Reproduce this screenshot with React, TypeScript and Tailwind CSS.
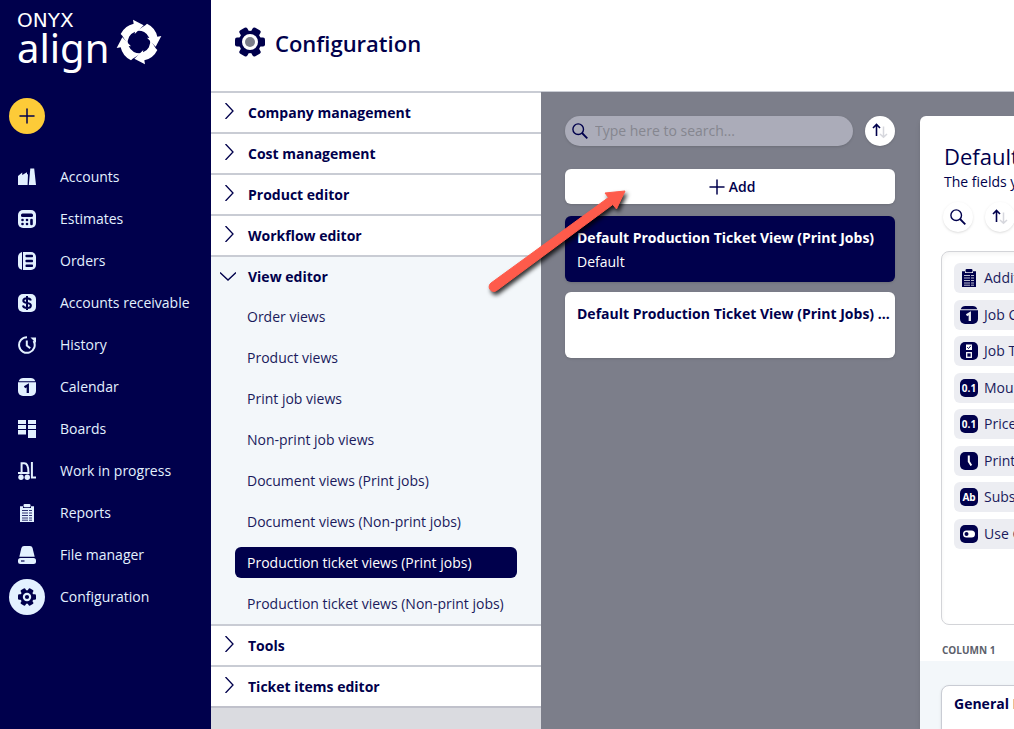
import React, { useState } from "react";
import { Plus } from "lucide-react";

type IconProps = { className?: string };

const Accounts = ({ className }: IconProps) => (
  <svg viewBox="0 0 18 18" className={className} fill="currentColor">
    <path d="M0 17V8l4.200-3.400V7L9 4.300V6.500l1-.6L9.600 17zM12.300.6h3.900L18 17h-7.200z" />
  </svg>
);

const Estimates = ({ className }: IconProps) => (
  <svg viewBox="0 0 18 18" className={className}>
    <rect width="18" height="18" rx="5" fill="currentColor" />
    <rect x="3" y="3.500" width="12" height="3.500" rx="1.500" fill="#00004c" />
    <g fill="#00004c">
      <circle cx="4.500" cy="10" r="1.300" />
      <circle cx="9" cy="10" r="1.300" />
      <circle cx="4.500" cy="14" r="1.300" />
      <circle cx="9" cy="14" r="1.300" />
      <rect x="12.200" y="8.700" width="2.600" height="6.600" rx="1.300" />
    </g>
  </svg>
);

const Orders = ({ className }: IconProps) => (
  <svg viewBox="0 0 18 18" className={className}>
    <rect width="18" height="18" rx="5" fill="currentColor" />
    <rect x="4" width="1" height="18" fill="#00004c" />
    <g fill="#00004c">
      <rect x="7.500" y="2.800" width="7.500" height="2.500" rx=".8" />
      <rect x="7.500" y="7.700" width="7.500" height="2.500" rx=".8" />
      <rect x="7.500" y="12.600" width="7.500" height="2.500" rx=".8" />
    </g>
  </svg>
);

const Receivable = ({ className }: IconProps) => (
  <svg viewBox="0 0 18 18" className={className}>
    <rect width="18" height="18" rx="5" fill="currentColor" />
    <path
      d="M12.900 6.500C12.500 4.900 11.100 4.200 9 4.200c-2.200 0-3.700 1-3.700 2.500C5.300 10 12.900 8 12.900 11.400c0 1.500-1.600 2.500-3.900 2.500s-3.700-.9-4.100-2.500M9 2v14"
      fill="none"
      stroke="#00004c"
      strokeWidth="2"
    />
  </svg>
);

const History = ({ className }: IconProps) => (
  <svg viewBox="0 0 18 18" className={className} fill="none" stroke="currentColor" strokeWidth="2">
    <path d="M9 1.200A7.800 7.800 0 1 0 15.600 5" />
    <path d="M12.500 1.500H18V7z" fill="currentColor" stroke="none" />
    <path d="M8.800 4.500v5l3.400 2.800" />
  </svg>
);

const Calendar = ({ className }: IconProps) => (
  <svg viewBox="0 0 18 18" className={className}>
    <path d="M.7 3.200C1.500 1.200 3 0 5.200 0h7.600c2.200 0 3.700 1.200 4.500 3.200z" fill="currentColor" />
    <path d="M0 4.200h18V13a5 5 0 0 1-5 5H5a5 5 0 0 1-5-5z" fill="currentColor" />
    <path d="M6.500 9.200 9.800 7.300V15" fill="none" className="stroke-(--hole)" strokeWidth="2.300" />
  </svg>
);

const Boards = ({ className }: IconProps) => (
  <svg viewBox="0 0 18 18" className={className} fill="currentColor">
    <path d="M0 0h8v4H0zM0 5h8v4H0zM0 10h8v4.400H0zM10 0h8v4h-8zM10 5h8v4h-8zM10 10h8v8h-8z" />
  </svg>
);

const Forklift = ({ className }: IconProps) => (
  <svg viewBox="0 0 18 18" className={className} fill="none" stroke="currentColor" strokeWidth="2">
    <path d="M3.600 10V1.200h2.600c3 0 4.200 4.400 4.200 8.800M0 11h11.500M13.900 0v15.500H18" />
    <circle cx="3" cy="15.300" r="2.700" fill="currentColor" stroke="none" />
    <circle cx="9.300" cy="15.300" r="2.700" fill="currentColor" stroke="none" />
  </svg>
);

const Clipboard = ({ className }: IconProps) => (
  <svg viewBox="0 0 18 18" className={className}>
    <path d="M2 2.200h3V4h8V2.200h3V18H2z" fill="currentColor" />
    <rect x="5.500" width="7" height="3.200" rx="1.200" fill="currentColor" />
    <path
      d="M4 6.500h6M11 6.500h3M4 9h6M11 9h3M4 11.500h6M11 11.500h3M4 14h6M11 14h3M4 16.200h6M11 16.200h3"
      className="stroke-(--hole)"
      strokeWidth=".8"
    />
  </svg>
);

const Drive = ({ className }: IconProps) => (
  <svg viewBox="0 0 18 18" className={className} fill="currentColor">
    <path d="M1.300 10.800 3.400 2.300C3.800.8 4.700 0 6 0h6c1.300 0 2.200.8 2.600 2.300l2.100 8.500z" />
    <rect y="12" width="18" height="6" rx="2.500" />
    <path d="M3 15h3.500" stroke="#00004c" strokeWidth="1.200" />
  </svg>
);

// six-toothed gear, the ring and the hub take their own colours
const Gear = ({ className, ring, hub, small }: IconProps & { ring: string; hub: string; small?: boolean }) => (
  <svg viewBox="0 0 30 30" className={className}>
    <g fill="currentColor">
      <circle cx="15" cy="15" r="11.300" />
      <rect x="0" y="10.500" width="30" height="9" rx="2" />
      <rect x="0" y="10.500" width="30" height="9" rx="2" transform="rotate(60 15 15)" />
      <rect x="0" y="10.500" width="30" height="9" rx="2" transform="rotate(120 15 15)" />
    </g>
    <circle cx="15" cy="15" r={small ? 7 : 8} fill={ring} />
    <circle cx="15" cy="15" r={small ? 3.500 : 5} fill={hub} />
  </svg>
);

const ConfigGear = ({ className }: IconProps) => <Gear className={className} ring="#e3f1ff" hub="#00004c" small />;

const Search = ({ className }: IconProps) => (
  <svg viewBox="0 0 16 16" className={className} fill="none" stroke="currentColor">
    <circle cx="6.200" cy="6.200" r="5.300" strokeWidth="1.400" />
    <path d="m10 10 5.300 5.300" strokeWidth="1.800" />
  </svg>
);

const SortArrows = ({ className }: IconProps) => (
  <svg viewBox="0 0 16 16" className={className} fill="none">
    <path d="M4.500 13V1.500M1 5l3.500-3.500L8 5" stroke="#00004c" strokeWidth="1.600" />
    <path d="M11.500 3.500V14M8 11l3.500 3.300L15 11" stroke="#d6d7dd" strokeWidth="1.500" />
  </svg>
);

const Badge = ({ children }: { children: React.ReactNode }) => (
  <span className="flex size-[18px] shrink-0 items-center justify-center rounded-[5px] bg-[#00004c] text-[10px] leading-none font-bold text-white">
    {children}
  </span>
);

const Logo = () => (
  <div className="flex h-[98px] pt-3 pl-[17px] text-white">
    <div>
      <p className="font-['DejaVu_Sans',sans-serif] text-[20px] leading-4">ONYX</p>
      <p className="font-['Noto_Sans',sans-serif] text-[40px] leading-10">align</p>
    </div>
    <svg viewBox="0 0 138 138" className="mt-[7px] ml-[7px] size-[46px]" fill="currentColor">
      {[0, 90, 180, 270].map((angle) => (
        <path
          key={angle}
          transform={`rotate(${angle} 69 69)`}
          d="M14 45A57 57 0 0 1 53 14L51 2 83 19 56 45 57 38A34 34 0 0 0 36 77L19 50z"
        />
      ))}
    </svg>
  </div>
);

const navItems = [
  { label: "Accounts", icon: Accounts },
  { label: "Estimates", icon: Estimates },
  { label: "Orders", icon: Orders },
  { label: "Accounts receivable", icon: Receivable },
  { label: "History", icon: History },
  { label: "Calendar", icon: Calendar },
  { label: "Boards", icon: Boards },
  { label: "Work in progress", icon: Forklift },
  { label: "Reports", icon: Clipboard },
  { label: "File manager", icon: Drive },
  { label: "Configuration", icon: ConfigGear, active: true },
];

const sections = [
  { title: "Company management" },
  { title: "Cost management" },
  { title: "Product editor" },
  { title: "Workflow editor" },
  {
    title: "View editor",
    items: [
      "Order views",
      "Product views",
      "Print job views",
      "Non-print job views",
      "Document views (Print jobs)",
      "Document views (Non-print jobs)",
      "Production ticket views (Print jobs)",
      "Production ticket views (Non-print jobs)",
    ],
  },
  { title: "Tools" },
  { title: "Ticket items editor" },
];

const fields = [
  { label: "Additional notes", icon: <Clipboard className="size-[18px] shrink-0" /> },
  { label: "Job Created", icon: <Calendar className="size-[18px] shrink-0" /> },
  {
    label: "Job Type",
    icon: (
      <Badge>
        <svg viewBox="0 0 18 18" className="size-[18px]" fill="none">
          <rect x="6" y="2.500" width="6" height="5.500" fill="white" />
          <path d="m7.200 5.200 1.300 1.300 2.300-2.700" stroke="#00004c" />
          <rect x="6.700" y="10.700" width="4.600" height="4.600" stroke="white" strokeWidth="1.300" />
        </svg>
      </Badge>
    ),
  },
  { label: "Mounting", icon: <Badge>0.1</Badge> },
  { label: "Price", icon: <Badge>0.1</Badge> },
  {
    label: "Print time",
    icon: (
      <Badge>
        <svg viewBox="0 0 18 18" className="size-[18px]" fill="none">
          <path d="M8.800 3.500V9.500l2.500 4" stroke="white" strokeWidth="2" />
        </svg>
      </Badge>
    ),
  },
  { label: "Substrate", icon: <Badge>Ab</Badge> },
  {
    label: "Use Grommets",
    icon: (
      <Badge>
        <svg viewBox="0 0 18 18" className="size-[18px]">
          <rect x="3" y="5.500" width="12" height="7" rx="3.500" fill="white" />
          <circle cx="6.500" cy="9" r="2" fill="#00004c" />
        </svg>
      </Badge>
    ),
  },
];

function Sidebar() {
  return (
    <aside className="w-[211px] shrink-0 bg-[#00004c] text-[#e3f1ff] [--hole:#00004c]">
      <Logo />
      <button aria-label="Create new" className="ml-[9px] flex size-9 items-center justify-center rounded-full bg-[#fdcb38] text-[#00004c]">
        <Plus className="size-6" strokeWidth={1.500} />
      </button>
      <nav className="mt-[22px]">
        {navItems.map(({ label, icon: Icon, active }) => (
          <a key={label} href="#" className="flex h-[42px] items-center gap-[15px] pl-[9px]">
            <span className={`flex size-9 items-center justify-center rounded-full ${active ? "bg-[#e3f1ff] text-[#00004c]" : ""}`}>
              <Icon className="size-[18px]" />
            </span>
            {label}
          </a>
        ))}
      </nav>
    </aside>
  );
}

function Sections() {
  const [open, setOpen] = useState("View editor");
  const [selected, setSelected] = useState("Production ticket views (Print jobs)");

  return (
    <div className="w-[330px] shrink-0 bg-[#dadbe0]">
      {sections.map(({ title, items }) => {
        const expanded = open === title;
        return (
          <section key={title} className={`border-t-2 border-[#c9ccd4] ${expanded ? "bg-[#f3f7fa]" : "bg-white"}`}>
            <button
              aria-expanded={expanded}
              onClick={() => setOpen(expanded ? "" : title)}
              className="flex h-[39px] w-full items-center gap-3 pl-[9px] text-left font-bold"
            >
              <svg viewBox="0 0 16 16" className={`mb-1 size-4 ${expanded ? "rotate-90" : ""}`} fill="none" stroke="currentColor" strokeWidth="1.300">
                <path d="m5.500 0 7.500 8-7.500 8" />
              </svg>
              {title}
            </button>
            {expanded &&
              items?.map((item) => (
                <div key={item} className="flex h-[41px] items-center px-6">
                  <button
                    onClick={() => setSelected(item)}
                    className={`h-[31px] w-full rounded-md px-3 text-left ${selected === item ? "bg-[#00004c] text-white" : "text-[#1a1a5c]"}`}
                  >
                    {item}
                  </button>
                </div>
              ))}
          </section>
        );
      })}
      <div className="border-t-2 border-[#c0c1cb]" />
    </div>
  );
}

function ViewList() {
  return (
    <div className="flex w-[330px] shrink-0 flex-col">
      <div className="flex gap-3">
        <label className="flex h-[30px] min-w-0 flex-1 items-center gap-[7px] rounded-full bg-[#abacb9] px-[7px] shadow">
          <Search className="size-4 shrink-0" />
          <input type="search" aria-label="Search views" placeholder="Type here to search..." className="min-w-0 flex-1 bg-transparent outline-none placeholder:text-[#85868f]" />
        </label>
        <button aria-label="Sort views" className="flex size-[30px] shrink-0 items-center justify-center rounded-full bg-white shadow">
          <SortArrows className="size-4" />
        </button>
      </div>
      <button className="mt-[23px] flex h-[35px] items-center justify-center rounded-md bg-white font-semibold shadow">
        <Plus className="size-6" strokeWidth={1.500} />
        Add
      </button>
      <button className="mt-3 h-[66px] rounded-md bg-[#00004c] px-3 pt-px text-left leading-6 text-white shadow">
        <span className="block truncate font-bold">Default Production Ticket View (Print Jobs)</span>
        Default
      </button>
      <button className="mt-[10px] h-[66px] rounded-md bg-white pr-1 pb-[22px] pl-3 text-left leading-6 shadow">
        <span className="block truncate font-bold">Default Production Ticket View (Print Jobs) Copy</span>
      </button>
    </div>
  );
}

function ViewDetails() {
  return (
    <div className="flex min-w-[480px] flex-1 flex-col rounded-tl-md bg-white whitespace-nowrap shadow-md">
      <div className="flex flex-col px-[21px] pt-[25px]">
        <h2 className="pl-[3px] text-[22px] leading-[31px]">Default Production Ticket View (Print Jobs)</h2>
        <p className="pl-[3px] leading-5">The fields you add will be shown on the ticket</p>
        <div className="mt-[10px] flex gap-3 pl-[2px]">
          <button aria-label="Search fields" className="flex size-[30px] items-center justify-center rounded-full bg-white shadow">
            <Search className="size-4" />
          </button>
          <button aria-label="Sort fields" className="flex size-[30px] items-center justify-center rounded-full bg-white shadow">
            <SortArrows className="size-4" />
          </button>
        </div>
        <div className="mt-[19px] h-[374px] rounded-lg border border-[#d3d4d8] px-3 pt-[11px] shadow-inner">
          <ul className="flex h-[286px] flex-col justify-between [--hole:#ecedf2]">
            {fields.map(({ label, icon }) => (
              <li key={label} className="flex h-[30px] items-center gap-[6px] rounded-md bg-[#ecedf2] px-[6px] text-[#1a1a5c]">
                <span className="text-[#00004c]">{icon}</span>
                {label}
              </li>
            ))}
          </ul>
        </div>
        <h3 className="mt-[17px] mb-[3px] pl-px text-[10px] leading-4 font-bold text-[#5d5f6c]">COLUMN 1</h3>
      </div>
      <div className="flex-1 bg-[#f3f7fa] px-[21px] pt-6">
        <div className="h-24 rounded-lg border border-[#c9ccd4] bg-white px-3 pt-2 shadow">
          <h4 className="leading-5 font-bold">General Info</h4>
        </div>
      </div>
    </div>
  );
}

const PointerArrow = () => (
  <svg viewBox="0 0 150 120" className="pointer-events-none absolute top-[182px] left-[484px] h-[120px] w-[150px] drop-shadow-[2px_3px_2px_rgba(0,0,0,0.8)]">
    <path
      d="M141 9 132.500 27 128.800 22.500 12.700 108.500A4.700 4.700 0 0 1 7 101L124.500 15.500 121 11z"
      fill="#fe5b4b"
      stroke="#fe5b4b"
      strokeLinejoin="round"
    />
  </svg>
);

export default function App() {
  return (
    <div className="relative flex h-screen overflow-hidden bg-white font-['Open_Sans',sans-serif] text-sm text-[#00004c]">
      <Sidebar />
      <main className="flex min-w-0 flex-1 flex-col">
        <header className="flex h-[91px] shrink-0 items-center gap-[10px] px-6 pb-[6px]">
          <Gear className="mb-[2px] size-[30px]" ring="white" hub="#7c7e8a" />
          <h1 className="text-[22px] leading-8 font-semibold">Configuration</h1>
        </header>
        <div className="flex min-h-0 flex-1">
          <Sections />
          <div className="flex min-w-0 flex-1 gap-[25px] overflow-hidden border-t border-[#c9ccd4] bg-[#7c7e8a] pt-6 pl-6">
            <ViewList />
            <ViewDetails />
          </div>
        </div>
      </main>
      <PointerArrow />
    </div>
  );
}
